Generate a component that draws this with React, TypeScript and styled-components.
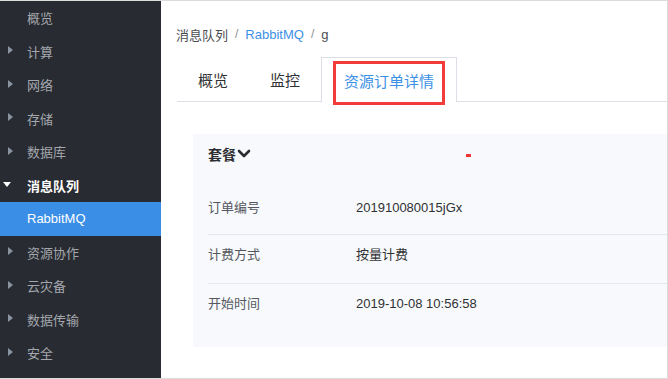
import React from "react";
import styled, { createGlobalStyle } from "styled-components";

const Global = createGlobalStyle`
  html, body { margin: 0; padding: 0; background: #fff; }
  body { font-family: "Liberation Sans", "Noto Sans CJK SC", sans-serif; }
  * { box-sizing: border-box; }
`;

const Frame = styled.div`
  width: 668px;
  height: 379px;
  display: flex;
  border-top: 1px solid #dcdcdc;
  border-right: 1px solid #dcdcdc;
  border-bottom: 1px solid #dcdcdc;
  overflow: hidden;
`;

const Sidebar = styled.nav`
  width: 161px;
  flex: none;
  background: #282b31;
  display: flex;
  flex-direction: column;
`;

const NavItem = styled.div<{ $active?: boolean; $open?: boolean; $sub?: boolean }>`
  position: relative;
  height: 33.5px;
  flex: none;
  display: flex;
  align-items: center;
  padding-left: 27px;
  font-size: 13px;
  color: ${(p) => (p.$active || p.$open ? "#ffffff" : "#a3a7ad")};
  font-weight: ${(p) => (p.$open ? 700 : 400)};
  background: ${(p) => (p.$active ? "#3a8ee6" : "transparent")};
`;

const Caret = styled.span<{ $down?: boolean }>`
  position: absolute;
  left: ${(p) => (p.$down ? "3px" : "8px")};
  top: 50%;
  width: 0;
  height: 0;
  ${(p) =>
    p.$down
      ? `margin-top: -3px;
         border-left: 4px solid transparent;
         border-right: 4px solid transparent;
         border-top: 5px solid #ffffff;`
      : `margin-top: -5px;
         border-top: 4.5px solid transparent;
         border-bottom: 4.5px solid transparent;
         border-left: 5px solid #8a93a0;`}
`;

const Main = styled.main`
  flex: 1;
  display: flex;
  flex-direction: column;
  padding: 21px 0 0 15px;
  min-width: 0;
`;

const Breadcrumb = styled.div`
  height: 24px;
  display: flex;
  align-items: center;
  gap: 7px;
  font-size: 13px;
  color: #4a4d52;
`;

const Crumb = styled.span<{ $link?: boolean }>`
  color: ${(p) => (p.$link ? "#3c91e6" : "#4a4d52")};
`;

const Sep = styled.span`
  color: #8c9096;
  font-size: 12px;
`;

const Tabs = styled.div`
  margin-top: 11px;
  margin-left: 1px;
  height: 45px;
  display: flex;
  border-bottom: 1px solid #dcdfe6;
`;

const Tab = styled.div<{ $active?: boolean }>`
  position: relative;
  display: flex;
  align-items: center;
  font-size: 15px;
  padding: 0 ${(p) => (p.$active ? "22px" : "21px")};
  color: ${(p) => (p.$active ? "#3c91e6" : "#303133")};
  ${(p) =>
    p.$active
      ? `border: 1px solid #dcdfe6;
         border-bottom: none;
         background: #fff;
         margin-bottom: -1px;
         height: 45px;`
      : ``}
`;

const Highlight = styled.span`
  position: absolute;
  left: 11px;
  top: 3px;
  width: 112px;
  height: 44px;
  border: 3px solid #f23c3c;
  pointer-events: none;
`;

const Card = styled.section`
  position: relative;
  margin: 32px 0 0 17px;
  background: #f7f9fc;
  padding: 0 0 15px 15px;
`;

const CardHeader = styled.div`
  height: 40px;
  margin-bottom: 14px;
  display: flex;
  align-items: center;
  gap: 1px;
  font-size: 14px;
  font-weight: 700;
  color: #2b2d31;
`;

const RedDash = styled.span`
  position: absolute;
  left: 273px;
  top: 20px;
  width: 5px;
  height: 3px;
  background: #f03434;
`;

const Row = styled.div<{ $first?: boolean }>`
  display: flex;
  align-items: flex-start;
  height: ${(p) => (p.$first ? "46px" : "49px")};
  border-top: ${(p) => (p.$first ? "none" : "1px solid #e3e6ec")};
  font-size: 13px;
  line-height: 40px;
`;

const Label = styled.span`
  width: 148px;
  flex: none;
  color: #55585e;
`;

const Value = styled.span`
  color: #303133;
`;

const sideItems: { label: string; caret?: "right" | "down"; active?: boolean; open?: boolean }[] = [
  { label: "概览" },
  { label: "计算", caret: "right" },
  { label: "网络", caret: "right" },
  { label: "存储", caret: "right" },
  { label: "数据库", caret: "right" },
  { label: "消息队列", caret: "down", open: true },
  { label: "RabbitMQ", active: true },
  { label: "资源协作", caret: "right" },
  { label: "云灾备", caret: "right" },
  { label: "数据传输", caret: "right" },
  { label: "安全", caret: "right" },
];

const rows = [
  { label: "订单编号", value: "201910080015jGx" },
  { label: "计费方式", value: "按量计费" },
  { label: "开始时间", value: "2019-10-08 10:56:58" },
];

export default function App() {
  return (
    <>
      <Global />
      <Frame>
        <Sidebar>
          {sideItems.map((it) => (
            <NavItem key={it.label} $active={it.active} $open={it.open}>
              {it.caret && <Caret $down={it.caret === "down"} />}
              {it.label}
            </NavItem>
          ))}
        </Sidebar>
        <Main>
          <Breadcrumb>
            <Crumb>消息队列</Crumb>
            <Sep>/</Sep>
            <Crumb $link>RabbitMQ</Crumb>
            <Sep>/</Sep>
            <Crumb>g</Crumb>
          </Breadcrumb>
          <Tabs>
            <Tab>概览</Tab>
            <Tab>监控</Tab>
            <Tab $active>
              资源订单详情
              <Highlight />
            </Tab>
          </Tabs>
          <Card>
            <CardHeader>
              套餐
              <svg width="14" height="10" viewBox="0 0 14 10">
                <polyline
                  points="2,2 7,7 12,2"
                  fill="none"
                  stroke="#2b2d31"
                  strokeWidth="2.6"
                  strokeLinecap="round"
                  strokeLinejoin="round"
                />
              </svg>
            </CardHeader>
            <RedDash />
            {rows.map((r, i) => (
              <Row key={r.label} $first={i === 0}>
                <Label>{r.label}</Label>
                <Value>{r.value}</Value>
              </Row>
            ))}
          </Card>
        </Main>
      </Frame>
    </>
  );
}
